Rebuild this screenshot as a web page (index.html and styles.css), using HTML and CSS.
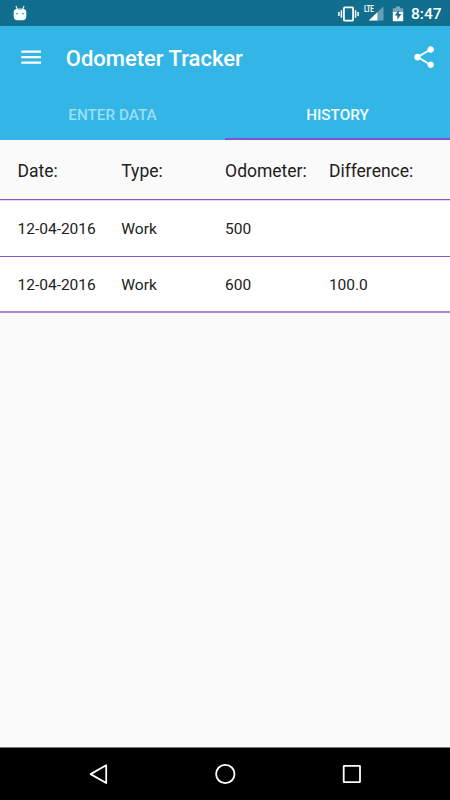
FILE: index.html
```html
<!DOCTYPE html>
<html lang="en">
<head>
<meta charset="utf-8">
<title>Odometer Tracker</title>
<link rel="stylesheet" href="styles.css">
</head>
<body>
<div class="screen">
  <div class="status">
    <svg class="droid" viewBox="0 0 14 16" width="14" height="16">
      <path d="M3 1l1.3 3.4M11 1L9.7 4.4" stroke="#e9fbff" stroke-width="1.2" fill="none"/>
      <path d="M2.5 4.2Q7 2.6 11.5 4.2Q13.3 4.8 13.3 7V11Q13.3 15.2 9.5 15.2H4.5Q.7 15.2.7 11V7Q.7 4.8 2.5 4.2z" fill="#f4ffff"/>
      <circle cx="4" cy="8.7" r=".8" fill="#376f80"/><circle cx="10" cy="8.7" r=".8" fill="#376f80"/>
      <path d="M5 4.6h4" stroke="#8cbfcc" stroke-width=".7"/>
    </svg>
    <svg class="vibrate" viewBox="0 0 21 16" width="21" height="16" fill="none" stroke="#fff" stroke-width="1.8">
      <rect x="5.9" y="1.3" width="9.2" height="13.4" rx="1" />
      <path d="M3.4 4.2v7.6M.9 6v4M17.6 4.2v7.6M20.1 6v4" stroke-width="1.5"/>
    </svg>
    <div class="signal">
      <svg viewBox="0 0 16 15" width="16" height="15">
        <path d="M15.5.2V14.6H.8z" fill="#659fb4"/>
        <path d="M9.4 6.2V14.6H.8z" fill="#fff"/>
      </svg>
      <span class="lte">LTE</span>
    </div>
    <svg class="battery" viewBox="0 0 12 16" width="12" height="16">
      <path d="M.8 2.2H4V.6h4v1.6h3.2v4.2H.8z" fill="#79aabc"/>
      <path d="M.8 6h10.4v9.2H.8z" fill="#fff"/>
      <path d="M6.8 3.7L2.8 9.5h2.5v4.2l4-5.8H6.8z" fill="#126e8e"/>
    </svg>
    <span class="clock">8:47</span>
  </div>
  <header class="bar">
    <svg viewBox="0 0 24 24" width="26.25" height="26.25" fill="#fff"><path d="M3 18h18v-2H3v2zm0-5h18v-2H3v2zm0-7v2h18V6H3z"/></svg>
    <h1>Odometer Tracker</h1>
    <svg viewBox="0 0 24 24" width="26.25" height="26.25" fill="#fff"><path d="M18 16.08c-.76 0-1.44.3-1.96.77L8.91 12.7c.05-.23.09-.46.09-.7s-.04-.47-.09-.7l7.05-4.11c.54.5 1.25.81 2.04.81 1.66 0 3-1.34 3-3s-1.34-3-3-3-3 1.34-3 3c0 .24.04.47.09.7L8.04 9.81C7.5 9.31 6.79 9 6 9c-1.66 0-3 1.34-3 3s1.34 3 3 3c.79 0 1.5-.31 2.04-.81l7.12 4.16c-.05.21-.08.43-.08.65 0 1.61 1.31 2.92 2.92 2.92s2.92-1.31 2.92-2.92-1.31-2.92-2.92-2.92z"/></svg>
  </header>
  <nav class="tabs">
    <div class="tab">ENTER DATA</div>
    <div class="tab active">HISTORY</div>
  </nav>
  <main>
    <div class="row head"><span>Date:</span><span>Type:</span><span>Odometer:</span><span>Difference:</span></div>
    <div class="row first"><span>12-04-2016</span><span>Work</span><span>500</span><span></span></div>
    <div class="row last"><span>12-04-2016</span><span>Work</span><span>600</span><span>100.0</span></div>
  </main>
  <footer class="nav">
    <svg viewBox="0 0 24 24" width="24" height="24"><path d="M20.2 3.2V21L4.6 12.1z"/></svg>
    <svg viewBox="0 0 24 24" width="24" height="24"><circle cx="12.3" cy="12" r="9.2"/></svg>
    <svg viewBox="0 0 24 24" width="24" height="24"><rect x="3.7" y="3.9" width="16.3" height="16.3" rx=".5"/></svg>
  </footer>
</div>
</body>
</html>
```

FILE: styles.css
```css
* { box-sizing: border-box; }
body { margin: 0; font-family: Roboto, "Liberation Sans", sans-serif; }
.screen {
  width: 450px;
  height: 800px;
  display: flex;
  flex-direction: column;
  background: #fafafa;
  overflow: hidden;
}
svg { display: block; flex: none; }
.status {
  height: 26px;
  flex: none;
  display: flex;
  align-items: center;
  padding: 1px 9px 0 13px;
  background: #126e8e;
  color: #fff;
}
.droid { margin-top: -2px; }
.vibrate { margin-left: auto; }
.signal { position: relative; margin-left: 9px; }
.signal svg { width: 16px; }
.lte {
  position: absolute;
  left: -4px;
  top: -1px;
  font-size: 9px;
  font-weight: 700;
  line-height: 8px;
  letter-spacing: -0.2px;
  transform: scaleX(.7);
  transform-origin: left;
}
.battery { margin-left: 8px; }
.clock {
  width: 30px;
  margin-left: 7px;
  font-size: 15.5px;
  font-weight: 500;
  line-height: 20px;
  white-space: nowrap;
}
.bar {
  height: 63px;
  flex: none;
  display: flex;
  align-items: center;
  padding: 0 13px 1px 17.5px;
  background: #33b5e5;
}
h1 {
  flex: 1;
  margin: 3px 0 0 22px;
  font-size: 22px;
  line-height: 28px;
  font-weight: 500;
  color: #fff;
}
.tabs { display: flex; height: 51px; flex: none; background: #33b5e5; }
.tab {
  flex: 1;
  height: 51px;
  text-align: center;
  font-size: 15.3px;
  line-height: 53px;
  font-weight: 500;
  color: #9cdff5;
}
.tab.active { color: #f3fdff; border-bottom: 2.4px solid #7e57d8; }
.row {
  display: grid;
  grid-template-columns: repeat(4, 103.8px);
  align-items: center;
  height: 56px;
  padding-left: 17.5px;
  font-size: 15.5px;
  color: #212121;
  background: #fff;
  border-bottom: 1px solid #8259c8;
}
.row.head {
  height: 60px;
  padding-top: 2px;
  font-size: 17.5px;
  background: #fafafa;
}
.row.first { height: 57px; border-top: 1px solid #e4d7f8; }
.row.last { padding-top: 1px; border-bottom: 2px solid #a98bd8; }
.nav {
  height: 53px;
  margin-top: auto;
  display: flex;
  align-items: center;
  justify-content: space-between;
  padding: 0 86px 1px 86px;
  background: #000;
  border-top: 1px solid #777;
}
.nav svg { fill: none; stroke: #fff; stroke-width: 1.8; stroke-linejoin: round; }
```
